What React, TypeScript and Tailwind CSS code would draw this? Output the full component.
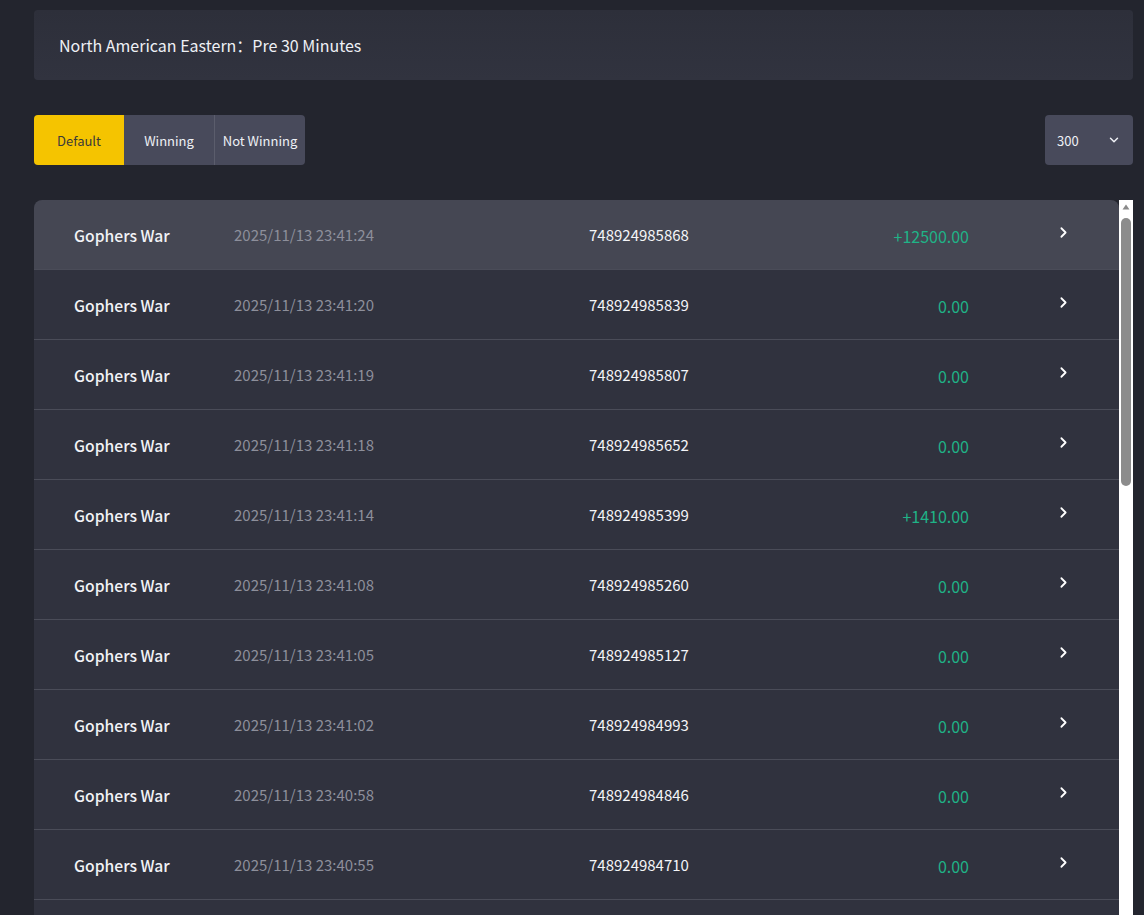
import React from "react";
import { ChevronRight, ChevronDown } from "lucide-react";

const base = [
  { time: "2025/11/13 23:41:24", id: "748924985868", amt: "+12500.00" },
  { time: "2025/11/13 23:41:20", id: "748924985839", amt: "0.00" },
  { time: "2025/11/13 23:41:19", id: "748924985807", amt: "0.00" },
  { time: "2025/11/13 23:41:18", id: "748924985652", amt: "0.00" },
  { time: "2025/11/13 23:41:14", id: "748924985399", amt: "+1410.00" },
  { time: "2025/11/13 23:41:08", id: "748924985260", amt: "0.00" },
  { time: "2025/11/13 23:41:05", id: "748924985127", amt: "0.00" },
  { time: "2025/11/13 23:41:02", id: "748924984993", amt: "0.00" },
  { time: "2025/11/13 23:40:58", id: "748924984846", amt: "0.00" },
  { time: "2025/11/13 23:40:55", id: "748924984710", amt: "0.00" },
  { time: "2025/11/13 23:40:51", id: "748924984582", amt: "0.00" },
];

export default function App() {
  return (
    <div
      className="h-screen overflow-hidden bg-[#23252e] pl-[34px] pr-[11px] pt-[10px]"
      style={{ fontFamily: '"Noto Sans CJK SC", "Noto Sans", sans-serif' }}
    >
      <div className="h-[70px] rounded-[4px] bg-gradient-to-b from-[#2d2f3a] to-[#31333f] flex items-center pl-[25px] text-[16px] text-[#eef0f5]">
        North American Eastern：Pre 30 Minutes
      </div>

      <div className="mt-[35px] flex items-center justify-between">
        <div className="flex h-[50px] text-[13px]">
          <div className="w-[90px] flex items-center justify-center bg-[#f5c400] text-[#3a3a3a] rounded-l-[4px] pt-[2px]">
            Default
          </div>
          <div className="w-[91px] flex items-center justify-center bg-[#484a5b] text-[#eef0f5] border-r border-[#5b5d6c] pt-[2px]">
            Winning
          </div>
          <div className="w-[90px] flex items-center justify-center bg-[#484a5b] text-[#eef0f5] rounded-r-[4px] pt-[2px]">
            Not Winning
          </div>
        </div>
        <div className="w-[88px] h-[50px] rounded-[4px] bg-[#484a5b] flex items-center justify-between pl-[12px] pr-[12px] text-[13px] text-[#eef0f5]">
          <span className="pt-[2px]">300</span>
          <ChevronDown size={14} strokeWidth={2.5} />
        </div>
      </div>

      <div className="mt-[35px] flex h-[760px]">
        <div className="flex-1 overflow-hidden">
          {base.map((r, i) => (
            <div
              key={i}
              className={`h-[70px] flex items-center border-b border-[#4a4c58] ${
                i === 0 ? "bg-[#454753] rounded-t-[8px]" : "bg-[#30323e]"
              }`}
            >
              <div className="w-[200px] pl-[40px] pt-[2px] text-[15.7px] font-medium text-[#f2f3f7]">Gophers War</div>
              <div className="w-[355px] pt-[2px] text-[15px] text-[#8d8f9b]">{r.time}</div>
              <div className="w-[200px] pt-[2px] text-[15px] text-[#f4f5f8]">{r.id}</div>
              <div className="w-[180px] pt-[2px] text-right text-[16px] text-[#1fb387]">{r.amt}</div>
              <div className="flex-1 flex justify-center pl-[39px] -mt-[5px] text-white">
                <ChevronRight size={17} strokeWidth={2.5} />
              </div>
            </div>
          ))}
        </div>
        <div className="w-[14px] bg-white flex flex-col items-center pt-[4px]">
          <svg width="8" height="6" viewBox="0 0 8 6" className="mb-[8px]">
            <polygon points="4,0.5 7.5,5.5 0.5,5.5" fill="#8a8a8a" />
          </svg>
          <div className="w-[10px] h-[268px] rounded-[5px] bg-[#8c8c8c]" />
        </div>
      </div>
    </div>
  );
}
